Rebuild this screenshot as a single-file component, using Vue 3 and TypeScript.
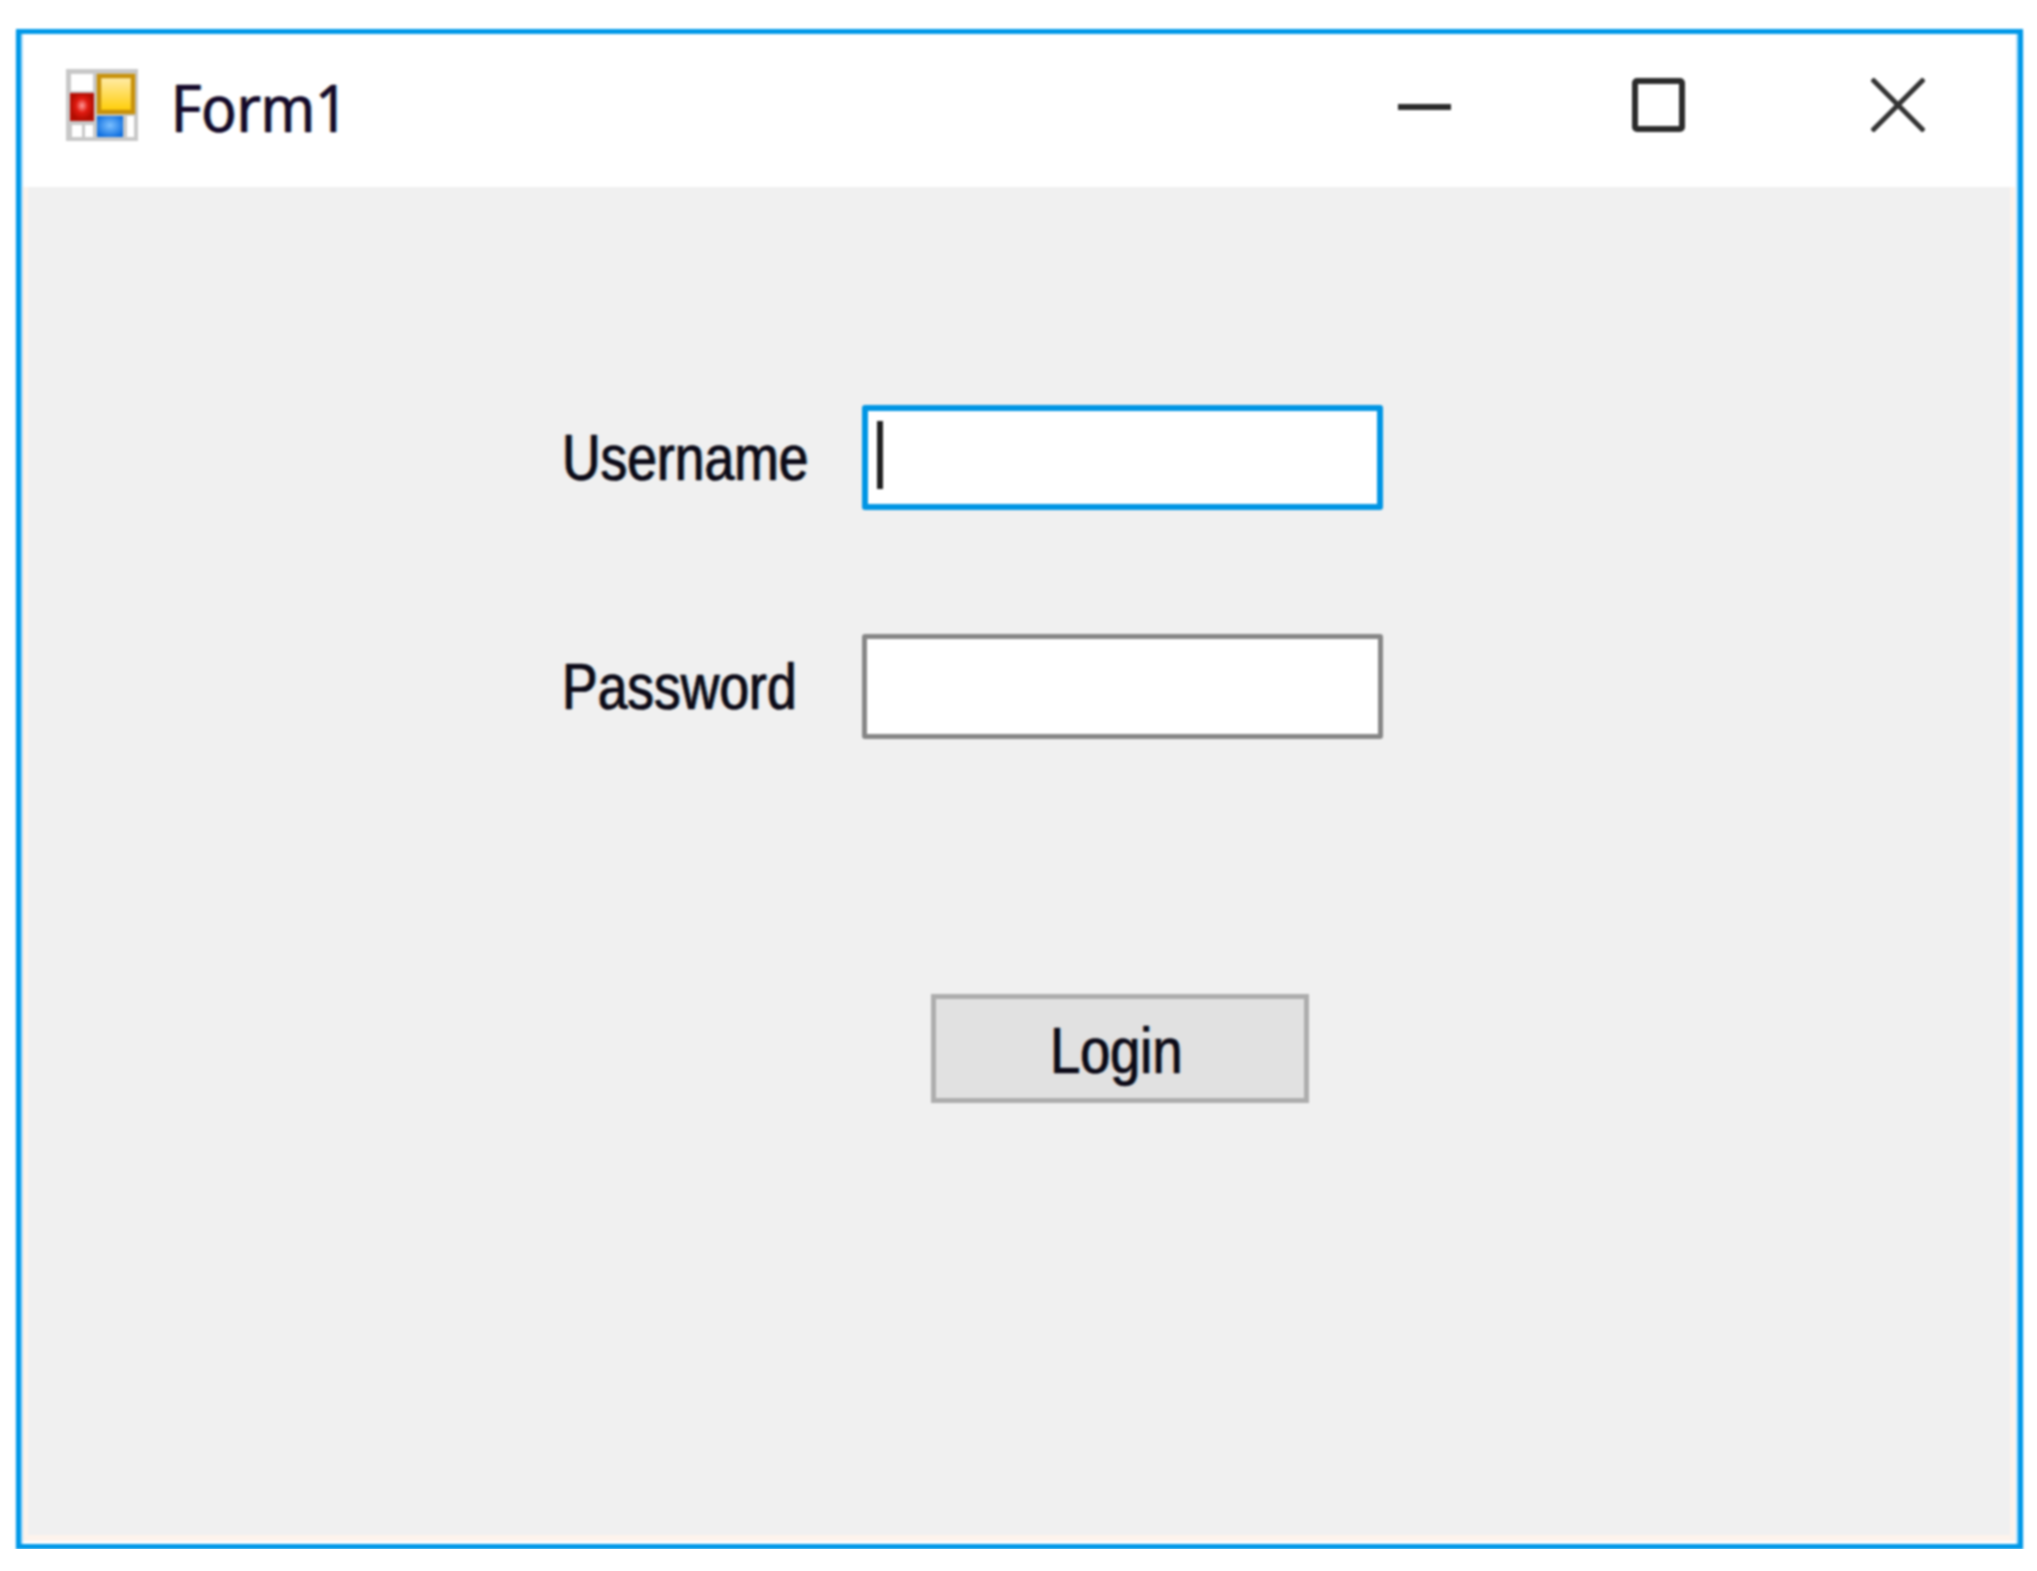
<script setup lang="ts">
import { ref } from "vue";

const username = ref("");
const password = ref("");
</script>

<template>
  <div class="window">
    <!-- Title bar -->
    <header class="titlebar">
      <svg class="app-icon" viewBox="0 0 72 72" width="72" height="72">
        <defs>
          <radialGradient id="red" cx="50%" cy="45%" r="55%">
            <stop offset="0" stop-color="#ff9a9a" />
            <stop offset="0.5" stop-color="#e01a10" />
            <stop offset="1" stop-color="#b00c00" />
          </radialGradient>
          <linearGradient id="yellow" x1="0" y1="0" x2="0" y2="1">
            <stop offset="0" stop-color="#ffedb0" />
            <stop offset="1" stop-color="#ffcc00" />
          </linearGradient>
          <radialGradient id="blue" cx="50%" cy="45%" r="60%">
            <stop offset="0" stop-color="#7cc0ff" />
            <stop offset="1" stop-color="#0f6fe0" />
          </radialGradient>
        </defs>
        <rect x="0" y="0" width="72" height="72" fill="#c8c8c8" />
        <rect x="5" y="5" width="22" height="17" fill="#fff" />
        <rect x="5" y="25" width="22" height="26" fill="url(#red)" stroke="#b81208" stroke-width="2" />
        <rect x="6" y="56" width="10" height="12" fill="#fff" />
        <rect x="19" y="56" width="8" height="12" fill="#fff" />
        <rect x="33" y="7" width="34" height="36" fill="url(#yellow)" stroke="#c8920c" stroke-width="4.5" />
        <rect x="31" y="47" width="26" height="21" fill="url(#blue)" />
        <rect x="61" y="47" width="7" height="21" fill="#fff" />
      </svg>
      <span class="title">Form1</span>

      <div class="controls">
        <svg class="ctl" viewBox="0 0 54 54" width="54" height="54">
          <path d="M0 29H53" stroke="#2b2b2b" stroke-width="6" fill="none" />
        </svg>
        <svg class="ctl" viewBox="0 0 54 54" width="54" height="54">
          <rect x="3" y="3" width="47" height="48" rx="2" stroke="#2b2b2b" stroke-width="6" fill="none" />
        </svg>
        <svg class="ctl ctl-close" viewBox="0 0 54 54" width="54" height="54">
          <path d="M1 1L53 53M53 1L1 53" stroke="#333" stroke-width="5" fill="none" />
        </svg>
      </div>
    </header>

    <!-- Client area -->
    <main class="client">
      <form class="form" @submit.prevent>
        <label class="label" for="user">Username</label>
        <div class="field">
          <input id="user" v-model="username" class="input input-focus" type="text" />
          <span class="caret"></span>
        </div>

        <label class="label" for="pass">Password</label>
        <div class="field">
          <input id="pass" v-model="password" class="input" type="password" />
        </div>

        <button class="button" type="submit"><span class="button-text">Login</span></button>
      </form>
    </main>
  </div>
</template>

<style>
html,
body {
  margin: 0;
  background: #fff;
}
</style>

<style scoped>
.window {
  width: 2007px;
  height: 1520px;
  margin: 29px 0 0 16px;
  box-sizing: border-box;
  display: flex;
  flex-direction: column;
  background: #fff;
  border: 5px solid #0098e8;
  box-shadow: 0 2px 2px #bfe3fa, inset 2px 0 0 #a8dcfa, inset -2px 0 0 #a8dcfa;
  filter: blur(1.1px);
}

.titlebar {
  height: 153px;
  flex: none;
  box-sizing: border-box;
  display: flex;
  align-items: center;
  padding: 0 0 12px 45px;
}

.title {
  margin-left: 33px;
  margin-top: 2px;
  transform: scaleX(0.89);
  transform-origin: left center;
  font-family: "Open Sans", sans-serif;
  font-size: 66px;
  line-height: 1;
  color: #14082a;
  -webkit-text-stroke: 0.6px #14082a;
  text-shadow: -2px 0 rgba(255, 140, 0, 0.55), 2px 0 rgba(0, 150, 255, 0.55);
}

.controls {
  margin-left: auto;
  display: flex;
  align-items: center;
  gap: 180px;
  padding-right: 93px;
}

.ctl-close {
  margin-left: 5px;
}

.client {
  flex: 1;
  margin: 0 3px 3px 2px;
  background: #f0f0f0;
  border: solid #fdf3ec;
  border-width: 0 5px 6px 5px;
}

.form {
  display: grid;
  grid-template-columns: 300px 521px;
  grid-auto-rows: min-content;
  row-gap: 124px;
  align-items: center;
  padding: 218px 0 0 534px;
}

.label {
  transform: scaleX(0.835);
  transform-origin: left center;
  font-family: "Liberation Sans", Arial, sans-serif;
  font-size: 64px;
  line-height: 1;
  color: #0c0a18;
  -webkit-text-stroke: 0.6px #0c0a18;
  text-shadow: -2px 0 rgba(255, 120, 0, 0.5), 2px 0 rgba(0, 150, 255, 0.5);
}

.field {
  position: relative;
  display: flex;
}

.input {
  width: 100%;
  height: 105px;
  box-sizing: border-box;
  background: #fff;
  border: 5px solid #868686;
  border-radius: 3px;
  outline: none;
  padding: 0;
  caret-color: transparent;
}

.input-focus {
  border: 6px solid #0095e4;
}

.caret {
  position: absolute;
  left: 15px;
  top: 16px;
  width: 6px;
  height: 68px;
  background: #1f1f1f;
}

.button {
  grid-column: 1 / -1;
  margin: 131px 0 0 369px;
  width: 378px;
  height: 109px;
  box-sizing: border-box;
  padding: 4px 8px 0 0;
  background: #e1e1e1;
  border: 5px solid #adadad;
  border-radius: 0;
}

.button-text {
  display: inline-block;
  transform: scaleX(0.845);
  font-family: "Liberation Sans", Arial, sans-serif;
  font-size: 64px;
  line-height: 1;
  color: #0c0a18;
  -webkit-text-stroke: 0.6px #0c0a18;
  text-shadow: -2px 0 rgba(255, 120, 0, 0.5), 2px 0 rgba(0, 150, 255, 0.5);
}
</style>
